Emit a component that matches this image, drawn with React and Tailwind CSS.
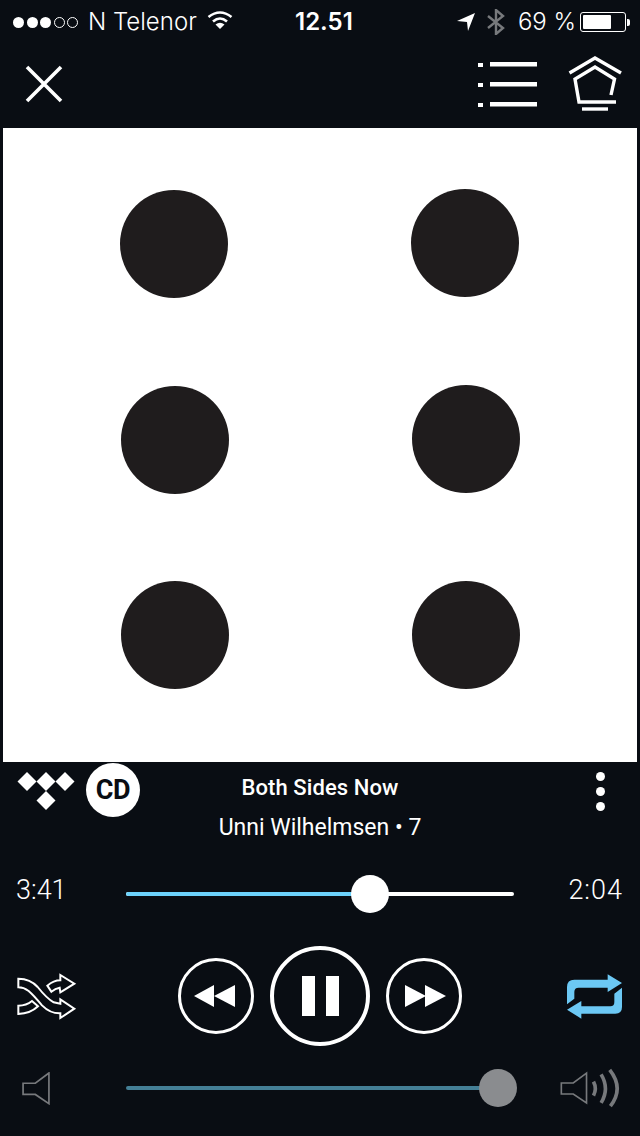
const statusFont = "font-['Inter','Liberation_Sans',sans-serif]";
const dinFont = "font-['Roboto','Liberation_Sans',sans-serif]";

function SignalDots() {
  return (
    <div className="flex items-center gap-[2.5px]">
      <div className="w-[11px] h-[11px] rounded-full bg-white" />
      <div className="w-[11px] h-[11px] rounded-full bg-white" />
      <div className="w-[11px] h-[11px] rounded-full bg-white" />
      <div className="w-[11px] h-[11px] rounded-full border border-white" />
      <div className="w-[11px] h-[11px] rounded-full border border-white" />
    </div>
  );
}

function Wifi() {
  return (
    <svg width="26" height="20" viewBox="0 0 26 20" fill="none" stroke="white" strokeWidth="2.6">
      <path d="M1.5 7 Q13 -2 24.5 7" />
      <path d="M6 11.5 Q13 5.5 20 11.5" />
      <path d="M13 19 L8.5 14.5 Q13 11 17.5 14.5 Z" fill="white" stroke="none" />
    </svg>
  );
}

function StatusBar() {
  return (
    <div className={`relative h-[44px] flex items-center justify-between pl-[13px] pr-[10px] text-white ${statusFont}`}>
      <div className="flex items-center">
        <SignalDots />
        <span className="ml-[10px] text-[24px] font-light leading-none">N Telenor</span>
        <div className="ml-[10px] -mt-[4px]"><Wifi /></div>
      </div>
      <span className="absolute left-[295px] top-[9px] text-[24px] font-semibold leading-[26px]">12.51</span>
      <div className="flex items-center">
        <svg width="18" height="20" viewBox="0 0 18 20" fill="white">
          <path d="M0 9 L18 1 L11 19 L10 10 Z" />
        </svg>
        <svg className="ml-[12px]" width="18" height="26" viewBox="0 0 18 26" fill="none" stroke="#77797c" strokeWidth="2.4">
          <path d="M1 7 L16 19 L9 25 L9 1 L16 7 L1 19" />
        </svg>
        <span className="ml-[13px] text-[24px] font-light leading-none">69 %</span>
        <div className="ml-[4px] w-[46px] h-[20px] rounded-[3px] border border-white p-[2px]">
          <div className="w-[28px] h-full bg-white rounded-[1px]" />
        </div>
        <div className="ml-[1px] w-[3px] h-[7px] bg-white rounded-r-[2px]" />
      </div>
    </div>
  );
}

function NavBar() {
  return (
    <div className="h-[84px] pb-[4px] flex items-center justify-between pl-[24px] pr-[16px]">
      <svg width="40" height="40" viewBox="0 0 40 40" stroke="white" strokeWidth="3.6">
        <path d="M3 3 L37 37 M37 3 L3 37" />
      </svg>
      <div className="flex items-center gap-[30px]">
        <svg width="60" height="50" viewBox="0 0 60 50" fill="white">
          <rect x="0" y="4" width="5" height="4" />
          <rect x="12" y="3" width="47" height="4.5" />
          <rect x="0" y="24" width="5" height="4" />
          <rect x="12" y="23" width="47" height="4.5" />
          <rect x="0" y="44" width="5" height="4" />
          <rect x="12" y="43" width="47" height="4.5" />
        </svg>
        <svg width="56" height="56" viewBox="0 0 56 56" fill="none" stroke="white" strokeWidth="3.4">
          <path d="M1.5 17 L27 2 L53 17" />
          <path d="M43 39 L46.500 23 L27 11 L7 23 L11 46 L48 46" />
          <path d="M14 53 L40 53" />
        </svg>
      </div>
    </div>
  );
}

function AlbumArt() {
  const dots = [
    [171, 116], [462, 115],
    [172, 312], [463, 311],
    [172, 507], [463, 507],
  ];
  return (
    <div className="mx-[3px] h-[634px] bg-white">
      <svg width="634" height="634" viewBox="0 0 634 634">
        {dots.map(([cx, cy]) => (
          <circle key={`${cx}-${cy}`} cx={cx} cy={cy} r="54" fill="#1f1c1d" />
        ))}
      </svg>
    </div>
  );
}

function TrackInfo() {
  return (
    <div className={`h-[100px] grid grid-cols-[1fr_auto_1fr] text-white ${dinFont}`}>
      <div className="flex items-start pl-[17px] pt-[1px]">
        <svg className="mt-[9px]" width="58" height="38" viewBox="0 0 58 38" fill="white">
          <path d="M10 0 L19.500 9.500 L10 19 L0.500 9.500 Z" />
          <path d="M29 0 L38.500 9.500 L29 19 L19.500 9.500 Z" />
          <path d="M48 0 L57.500 9.500 L48 19 L38.500 9.500 Z" />
          <path d="M29 19 L38.500 28.500 L29 38 L19.500 28.500 Z" />
        </svg>
        <div className="ml-[11px] w-[54px] h-[54px] rounded-full bg-white flex items-center justify-center text-[#090d13] text-[27px] font-bold tracking-[-0.3px]">
          CD
        </div>
      </div>
      <div className="flex flex-col items-center">
        <span className="mt-[12px] text-[22px] font-medium leading-[28px] tracking-[0.1px]">Both Sides Now</span>
        <span className="mt-[12px] text-[23px] leading-[28px]">Unni Wilhelmsen • 7</span>
      </div>
      <div className="flex justify-end pr-[35px] pt-[10px]">
        <div className="flex flex-col gap-[6px]">
          <div className="w-[9px] h-[9px] rounded-full bg-white" />
          <div className="w-[9px] h-[9px] rounded-full bg-white" />
          <div className="w-[9px] h-[9px] rounded-full bg-white" />
        </div>
      </div>
    </div>
  );
}

function Progress() {
  return (
    <div className={`h-[56px] flex items-center text-white text-[27px] ${dinFont}`}>
      <div className="w-[126px] pl-[16px] font-light">3:41</div>
      <div className="relative flex-1 h-[4px] mt-[7px] bg-white rounded-full">
        <div className="h-full w-[244px] bg-[#6cd2fb] rounded-l-full" />
        <div className="absolute left-[225px] top-[-17px] w-[38px] h-[38px] rounded-full bg-white" />
      </div>
      <div className="w-[126px] pr-[17px] text-right font-light tracking-[1px]">2:04</div>
    </div>
  );
}

function Shuffle() {
  return (
    <svg width="60" height="47" viewBox="50 128 180 141" fill="none" stroke="white" strokeWidth="6" strokeLinejoin="miter">
      <path d="M54 145 Q90 145 112 170 Q140 205 160 216 L180 220 L180 207 L222 235 L180 263 L180 249 Q150 250 125 225 Q100 195 85 182 Q70 171 54 171 Z" />
      <path d="M141 166 Q160 150 180 150 L180 134 L222 160 L180 186 L178 172 Q165 174 153 184 Z" />
      <path d="M54 226 Q78 226 95 212 L113 228 Q90 250 54 251 Z" />
    </svg>
  );
}

function Rewind() {
  return (
    <svg className="mr-[3px]" width="41" height="22" viewBox="0 0 41 22" fill="white">
      <path d="M0 11 L20 0 L20 22 Z" />
      <path d="M20 11 L41 0 L41 22 Z" />
    </svg>
  );
}

function Forward() {
  return (
    <svg className="ml-[3px]" width="41" height="22" viewBox="0 0 41 22" fill="white">
      <path d="M0 0 L21 11 L0 22 Z" />
      <path d="M20 0 L41 11 L20 22 Z" />
    </svg>
  );
}

function Repeat() {
  return (
    <svg width="55" height="45" viewBox="740 132 165 133" fill="#6cc8f4">
      <path d="M862 148 L862 132 L905 158 L862 185 L862 172 L775 172 Q762 172 762 185 L762 205 L740 222 L740 170 Q740 148 762 148 Z" />
      <path d="M783 228 L783 212 L740 238 L783 265 L783 250 L885 250 Q905 250 905 230 L905 172 L882 190 L882 215 Q882 228 870 228 Z" />
    </svg>
  );
}

function Transport() {
  return (
    <div className="mt-[17px] h-[122px] grid grid-cols-[1fr_auto_1fr] items-center">
      <div className="pl-[17px]"><Shuffle /></div>
      <div className="flex items-center gap-[16px]">
        <div className="w-[76px] h-[76px] rounded-full border-[3px] border-white flex items-center justify-center"><Rewind /></div>
        <div className="w-[100px] h-[100px] rounded-full border-[4px] border-white flex items-center justify-center gap-[11px]">
          <div className="w-[13px] h-[40px] bg-white" />
          <div className="w-[13px] h-[40px] bg-white" />
        </div>
        <div className="w-[76px] h-[76px] rounded-full border-[3px] border-white flex items-center justify-center"><Forward /></div>
      </div>
      <div className="flex justify-end pr-[18px]"><Repeat /></div>
    </div>
  );
}

function Volume() {
  return (
    <div className="h-[62px] flex items-center">
      <div className="w-[126px] pl-[22px]">
        <svg width="28" height="33" viewBox="66 423 82 97" fill="none" stroke="#77797c" strokeWidth="5">
          <path d="M145 426 L105 456 L69 456 L69 489 L105 489 L145 516 Z" />
        </svg>
      </div>
      <div className="relative w-[388px] h-[4px] bg-[#447f96] rounded-full">
        <div className="absolute left-[353px] top-[-17px] w-[38px] h-[38px] rounded-full bg-[#8a8c8f]" />
      </div>
      <div className="flex-1 flex justify-end pr-[19px]">
        <svg width="61" height="40" viewBox="718 412 184 118" fill="none" stroke="#77797c" strokeWidth="5">
          <path d="M798 426 L758 456 L722 456 L722 489 L758 489 L798 516 Z" />
          <path d="M819 452 Q830 473 819 494" strokeWidth="11" />
          <path d="M842 430 Q868 473 842 516" strokeWidth="11" />
          <path d="M868 416 Q912 472 870 526" strokeWidth="11" />
        </svg>
      </div>
    </div>
  );
}

export default function App() {
  return (
    <div className="w-[640px] h-[1136px] overflow-hidden bg-[#090d13]">
      <StatusBar />
      <NavBar />
      <AlbumArt />
      <TrackInfo />
      <Progress />
      <Transport />
      <Volume />
    </div>
  );
}
